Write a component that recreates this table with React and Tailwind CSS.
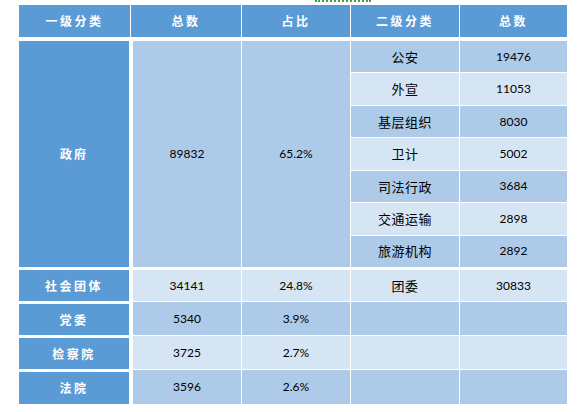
const cjk = "font-['Noto_Sans_CJK_SC',sans-serif]";
const num = "font-['Lato','Open_Sans',sans-serif]";

const DARK = "bg-[#adcbe9]";
const LIGHT = "bg-[#d6e5f4]";
const BLUE = "bg-[#5b9bd5]";

const subRows = [
  ["公安", "19476"],
  ["外宣", "11053"],
  ["基层组织", "8030"],
  ["卫计", "5002"],
  ["司法行政", "3684"],
  ["交通运输", "2898"],
  ["旅游机构", "2892"],
];

const lowerRows = [
  { name: "社会团体", total: "34141", pct: "24.8%", sub: "团委", subTotal: "30833", h: "h-[34px]" },
  { name: "党委", total: "5340", pct: "3.9%", h: "h-[34px]" },
  { name: "检察院", total: "3725", pct: "2.7%", h: "h-[34px]" },
  { name: "法院", total: "3596", pct: "2.6%", h: "h-[35px]" },
];

const HeadCell = ({ w, children }) => (
  <div
    className={`${w} ${BLUE} flex items-center justify-center text-[12px] font-bold tracking-[2.5px] text-white ${cjk}`}
  >
    {children}
  </div>
);

const Cell = ({ className, children, font = num }) => (
  <div className={`flex items-center justify-center text-black ${font} ${className}`}>
    {children}
  </div>
);

export default function App() {
  return (
    <div className="min-h-[412px] w-[584px] bg-white pl-[19px]">
      {/* selection marker from the spreadsheet */}
      <div className="h-[5px]">
        <div className="ml-[296px] h-[2px] w-[56px] border-t-2 border-dotted border-[#3fa34d]" />
      </div>

      {/* header */}
      <div className="flex h-[32px] gap-px">
        <HeadCell w="w-[111px]">一级分类</HeadCell>
        <HeadCell w="w-[110px]">总数</HeadCell>
        <HeadCell w="w-[108px]">占比</HeadCell>
        <HeadCell w="w-[108px]">二级分类</HeadCell>
        <HeadCell w="w-[107px]">总数</HeadCell>
      </div>

      {/* 政府 block */}
      <div className="mt-[4px] flex h-[226px]">
        <div
          className={`w-[110px] ${BLUE} flex items-center justify-center text-[12px] font-bold tracking-[2px] text-white ${cjk}`}
        >
          政府
        </div>
        <Cell className={`ml-[4px] w-[108px] ${DARK} text-[12px]`}>89832</Cell>
        <Cell className={`ml-px w-[108px] ${DARK} text-[12px]`}>65.2%</Cell>
        <div className="ml-px flex w-[216px] flex-col gap-px">
          {subRows.map(([name, total], i) => (
            <div key={name} className="flex flex-1 gap-px">
              <Cell
                font={cjk}
                className={`w-[108px] ${i % 2 ? LIGHT : DARK} text-[13px] tracking-[0.5px]`}
              >
                {name}
              </Cell>
              <Cell className={`w-[107px] ${i % 2 ? LIGHT : DARK} text-[12px]`}>{total}</Cell>
            </div>
          ))}
        </div>
      </div>

      {/* other first-level rows */}
      {lowerRows.map((r, i) => {
        const bg = i % 2 ? DARK : LIGHT;
        const top = i === 0 ? "mt-[3px]" : "mt-px";
        return (
          <div key={r.name} className={`flex ${r.h}`}>
            <div
              className={`mt-[3px] w-[110px] ${BLUE} flex items-center justify-center text-[12px] font-bold tracking-[2.5px] text-white ${cjk}`}
            >
              {r.name}
            </div>
            <Cell className={`${top} ml-[4px] w-[108px] ${bg} text-[12px]`}>{r.total}</Cell>
            <Cell className={`${top} ml-px w-[108px] ${bg} text-[12px]`}>{r.pct}</Cell>
            <Cell font={cjk} className={`${top} ml-px w-[108px] ${bg} text-[13px] tracking-[0.5px]`}>
              {r.sub}
            </Cell>
            <Cell className={`${top} ml-px w-[107px] ${bg} text-[12px]`}>{r.subTotal}</Cell>
          </div>
        );
      })}
    </div>
  );
}
